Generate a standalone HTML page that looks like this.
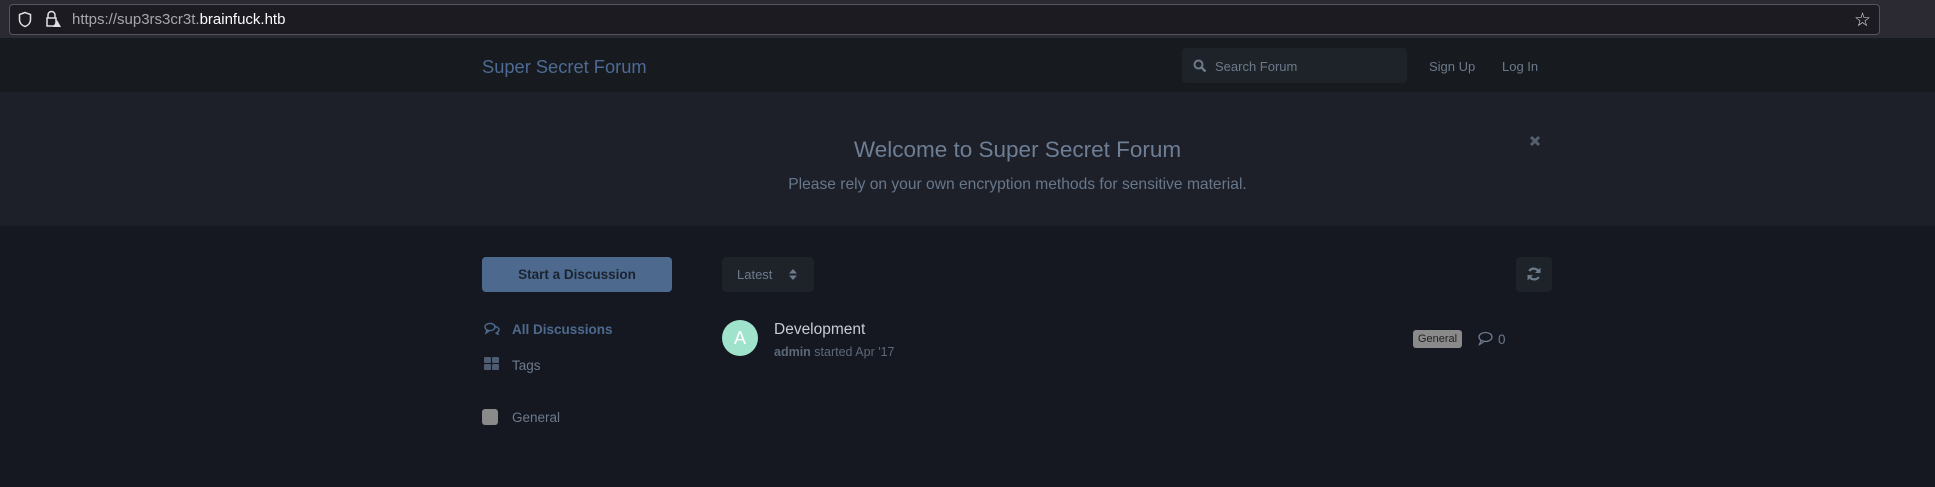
<!DOCTYPE html>
<html><head><meta charset="utf-8"><style>
*{margin:0;padding:0;box-sizing:border-box}
body{width:1935px;height:487px;background:#151820;font-family:"Liberation Sans",sans-serif;position:relative;overflow:hidden}
.a{position:absolute;white-space:nowrap}
</style></head><body>
<div class="a" style="left:0;top:0;width:1935px;height:38px;background:#2b2a33"></div>
<div class="a" style="left:9px;top:4px;width:1871px;height:31px;background:#1c1b22;border:1px solid #55545c;border-radius:4px"></div>
<svg class="a" style="left:17px;top:11px" width="16" height="17" viewBox="0 0 16 17"><path d="M8 1.5L2.5 3.5v5c0 3.5 2.5 6 5.5 7 3-1 5.5-3.5 5.5-7v-5z" fill="none" stroke="#e0e0e6" stroke-width="1.5"/></svg>
<svg class="a" style="left:44px;top:10px" width="18" height="18" viewBox="0 0 18 18"><path d="M4 8V5a3.5 3.5 0 0 1 7 0v3M3 8h9v8H3z" fill="none" stroke="#e0e0e6" stroke-width="1.5"/><path d="M13 10l4 7h-8z" fill="#e0e0e6"/></svg>
<div class="a" style="left:72px;top:11px;font-size:15px;color:#a6a6ad">https://sup3rs3cr3t.<span style="color:#fbfbfe">brainfuck.htb</span></div>
<div class="a" style="left:1854px;top:9px;font-size:19px;color:#e0e0e6">☆</div>
<div class="a" style="left:0;top:38px;width:1935px;height:54px;background:#171a1f"></div>
<div class="a" style="left:482px;top:56px;font-size:18.3px;color:#4d6a94">Super Secret Forum</div>
<div class="a" style="left:1182px;top:48px;width:225px;height:35px;background:#1e2229;border-radius:4px"></div>
<svg class="a" style="left:1193px;top:59px" width="14" height="14" viewBox="0 0 14 14"><circle cx="5.5" cy="5.5" r="4" fill="none" stroke="#6d7a8c" stroke-width="2"/><path d="M8.5 8.5l4 4" stroke="#6d7a8c" stroke-width="2.5"/></svg>
<div class="a" style="left:1215px;top:59px;font-size:13px;color:#6d7a8c">Search Forum</div>
<div class="a" style="left:1429px;top:59px;font-size:13px;color:#6d7a8c">Sign Up</div>
<div class="a" style="left:1502px;top:59px;font-size:13px;color:#6d7a8c">Log In</div>
<div class="a" style="left:0;top:92px;width:1935px;height:134px;background:#1d2029"></div>
<div class="a" style="left:0;top:137px;width:1935px;text-align:center;font-size:22.5px;color:#6e7e94;padding-left:100px">Welcome to Super Secret Forum</div>
<div class="a" style="left:0;top:176px;width:1935px;text-align:center;font-size:15.6px;color:#68778a;padding-left:100px">Please rely on your own encryption methods for sensitive material.</div>
<svg class="a" style="left:1529px;top:135px" width="12" height="12" viewBox="0 0 12 12"><path d="M2 2l8 8M10 2l-8 8" stroke="#55606e" stroke-width="3"/></svg>
<div class="a" style="left:482px;top:257px;width:190px;height:35px;background:#4d6a8e;border-radius:4px;text-align:center;line-height:35px;font-size:13.5px;font-weight:bold;color:#1b2230">Start a Discussion</div>
<div class="a" style="left:722px;top:257px;width:92px;height:35px;background:#1e2229;border-radius:4px;font-size:13px;color:#6d7a8c;line-height:35px;padding-left:15px">Latest</div>
<svg class="a" style="left:789px;top:268px" width="8" height="13" viewBox="0 0 8 13"><path d="M0 5.5L4 1l4 4.5zM0 7.5L4 12l4-4.5z" fill="#6d7a8c"/></svg>
<div class="a" style="left:1516px;top:257px;width:36px;height:35px;background:#1e2229;border-radius:4px"></div>
<svg class="a" style="left:1526px;top:266px" width="16" height="16" viewBox="0 0 16 16"><path d="M13 6.5A5.5 5.5 0 0 0 3.2 5M3 9.5A5.5 5.5 0 0 0 12.8 11" fill="none" stroke="#6d7a8c" stroke-width="2.2"/><path d="M14.5 1.5v5.5H9zM1.5 14.5V9H7z" fill="#6d7a8c"/></svg>
<svg class="a" style="left:484px;top:322px" width="16" height="13" viewBox="0 0 16 13"><ellipse cx="6" cy="5" rx="5" ry="3.6" fill="none" stroke="#4d6a8e" stroke-width="1.4"/><path d="M3 8l-1 3 3-2M10 4.5c3 0 5 1.5 5 3.3 0 1-.7 2-1.7 2.4l.7 2-2.5-1.5" fill="none" stroke="#4d6a8e" stroke-width="1.4"/></svg>
<div class="a" style="left:512px;top:322px;font-size:13.5px;font-weight:bold;color:#4d6a8e">All Discussions</div>
<svg class="a" style="left:484px;top:357px" width="15" height="14"><rect x="0" y="0" width="7" height="6" rx="1" fill="#4d5c70"/><rect x="8" y="0" width="7" height="6" rx="1" fill="#4d5c70"/><rect x="0" y="7" width="7" height="6" rx="1" fill="#4d5c70"/><rect x="8" y="7" width="7" height="6" rx="1" fill="#4d5c70"/></svg>
<div class="a" style="left:512px;top:358px;font-size:13.5px;color:#6d7a8c">Tags</div>
<div class="a" style="left:482px;top:409px;width:16px;height:16px;background:#8a8a8a;border-radius:3px"></div>
<div class="a" style="left:512px;top:410px;font-size:13.5px;color:#6d7a8c">General</div>
<div class="a" style="left:722px;top:320px;width:36px;height:36px;border-radius:50%;background:#a0e3cd;color:#fff;text-align:center;line-height:36px;font-size:18px">A</div>
<div class="a" style="left:774px;top:321px;font-size:15.5px;color:#c8ccd2">Development</div>
<div class="a" style="left:774px;top:345px;font-size:12.5px;color:#5d6878"><b>admin</b> started Apr '17</div>
<div class="a" style="left:1413px;top:330px;width:49px;height:18px;background:#8a8a8a;border-radius:3px;text-align:center;line-height:18px;font-size:11px;color:#222">General</div>
<svg class="a" style="left:1477px;top:331px" width="16" height="15" viewBox="0 0 16 15"><ellipse cx="8.5" cy="6" rx="6.5" ry="4.5" fill="none" stroke="#6d7a8c" stroke-width="1.3"/><path d="M4 9.5l-1.5 4 4-2.5" fill="none" stroke="#6d7a8c" stroke-width="1.3"/></svg>
<div class="a" style="left:1498px;top:332px;font-size:13.5px;color:#6d7a8c">0</div>
</body></html>
